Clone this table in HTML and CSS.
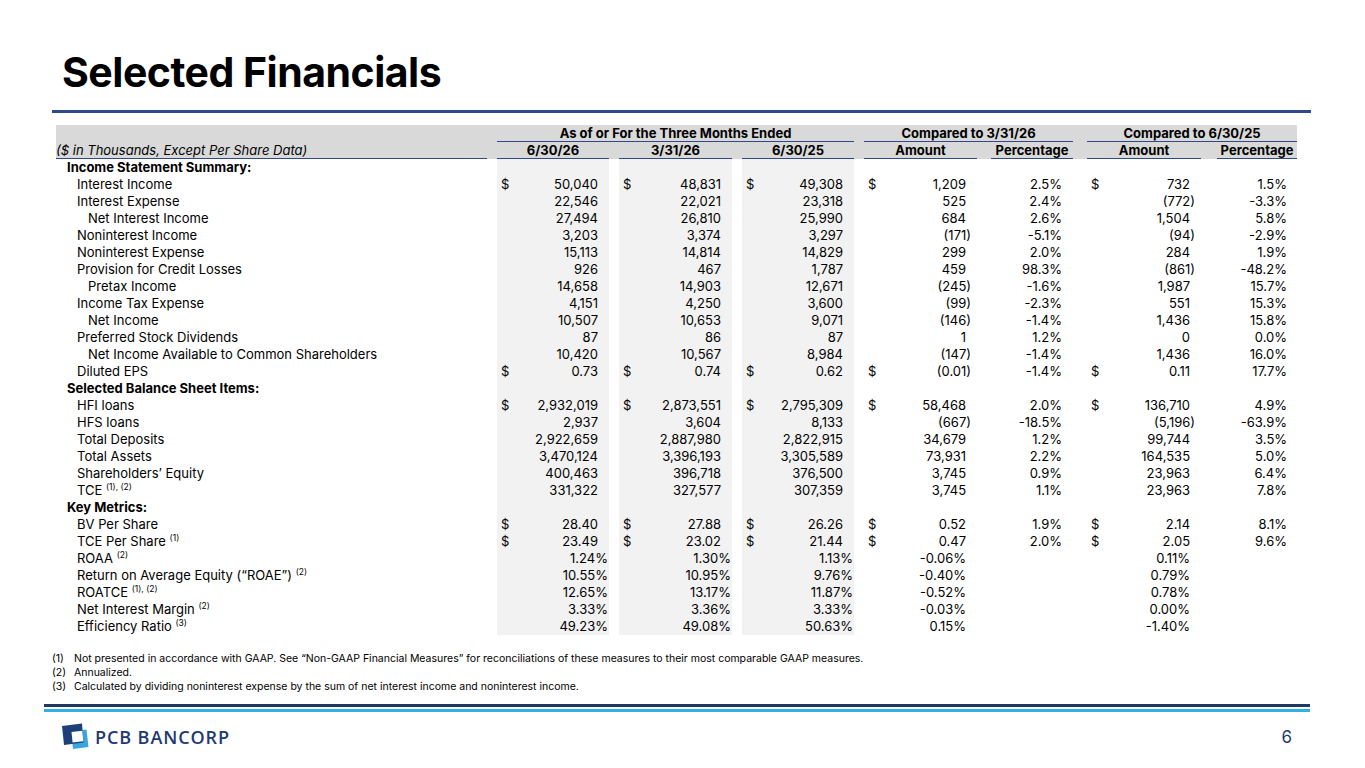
FILE: index.html
```html
<!DOCTYPE html>
<html lang="en">
<head>
<meta charset="utf-8">
<title>Selected Financials</title>
<link rel="stylesheet" href="styles.css">
</head>
<body>
<div class="slide">
  <h1 class="title">Selected Financials</h1>
  <div class="title-rule"></div>

  <table class="fin">
    <colgroup>
      <col class="w-label"><col class="w-sp"><col class="w-c"><col class="w-sp"><col class="w-c2"><col class="w-sp"><col class="w-c">
      <col class="w-sp"><col class="w-a"><col class="w-sp2"><col class="w-p1"><col class="w-sp2"><col class="w-a2"><col class="w-sp3"><col class="w-p2">
    </colgroup>
    <thead>
      <tr>
        <th></th><th></th>
        <th colspan="5" class="ul">As of or For the Three Months Ended</th>
        <th></th>
        <th colspan="3" class="ul">Compared to 3/31/26</th>
        <th></th>
        <th colspan="3" class="ul">Compared to 6/30/25</th>
      </tr>
      <tr>
        <th class="ul cap">($ in Thousands, Except Per Share Data)</th><th></th>
        <th class="ul">6/30/26</th><th></th><th class="ul">3/31/26</th><th></th><th class="ul">6/30/25</th>
        <th></th>
        <th class="ul">Amount</th><th></th><th class="ul">Percentage</th>
        <th></th>
        <th class="ul">Amount</th><th></th><th class="ul">Percentage</th>
      </tr>
    </thead>
    <tbody>
      <tr><td class="sec">Income Statement Summary:</td><td></td><td class="g"></td><td></td><td class="g"></td><td></td><td class="g"></td><td></td><td></td><td></td><td></td><td></td><td></td><td></td><td></td></tr>
      <tr><td class="l1">Interest Income</td><td></td><td class="g n"><span class="cur">$</span>50,040</td><td></td><td class="g n"><span class="cur">$</span>48,831</td><td></td><td class="g n"><span class="cur">$</span>49,308</td><td></td><td class="n"><span class="cur">$</span>1,209</td><td></td><td class="n">2.5%</td><td></td><td class="n"><span class="cur">$</span>732</td><td></td><td class="n p2">1.5%</td></tr>
      <tr><td class="l1">Interest Expense</td><td></td><td class="g n">22,546</td><td></td><td class="g n">22,021</td><td></td><td class="g n">23,318</td><td></td><td class="n">525</td><td></td><td class="n">2.4%</td><td></td><td class="n neg">(772)</td><td></td><td class="n p2">-3.3%</td></tr>
      <tr><td class="l2">Net Interest Income</td><td></td><td class="g n">27,494</td><td></td><td class="g n">26,810</td><td></td><td class="g n">25,990</td><td></td><td class="n">684</td><td></td><td class="n">2.6%</td><td></td><td class="n">1,504</td><td></td><td class="n p2">5.8%</td></tr>
      <tr><td class="l1">Noninterest Income</td><td></td><td class="g n">3,203</td><td></td><td class="g n">3,374</td><td></td><td class="g n">3,297</td><td></td><td class="n neg">(171)</td><td></td><td class="n">-5.1%</td><td></td><td class="n neg">(94)</td><td></td><td class="n p2">-2.9%</td></tr>
      <tr><td class="l1">Noninterest Expense</td><td></td><td class="g n">15,113</td><td></td><td class="g n">14,814</td><td></td><td class="g n">14,829</td><td></td><td class="n">299</td><td></td><td class="n">2.0%</td><td></td><td class="n">284</td><td></td><td class="n p2">1.9%</td></tr>
      <tr><td class="l1">Provision for Credit Losses</td><td></td><td class="g n">926</td><td></td><td class="g n">467</td><td></td><td class="g n">1,787</td><td></td><td class="n">459</td><td></td><td class="n">98.3%</td><td></td><td class="n neg">(861)</td><td></td><td class="n p2">-48.2%</td></tr>
      <tr><td class="l2">Pretax Income</td><td></td><td class="g n">14,658</td><td></td><td class="g n">14,903</td><td></td><td class="g n">12,671</td><td></td><td class="n neg">(245)</td><td></td><td class="n">-1.6%</td><td></td><td class="n">1,987</td><td></td><td class="n p2">15.7%</td></tr>
      <tr><td class="l1">Income Tax Expense</td><td></td><td class="g n">4,151</td><td></td><td class="g n">4,250</td><td></td><td class="g n">3,600</td><td></td><td class="n neg">(99)</td><td></td><td class="n">-2.3%</td><td></td><td class="n">551</td><td></td><td class="n p2">15.3%</td></tr>
      <tr><td class="l2">Net Income</td><td></td><td class="g n">10,507</td><td></td><td class="g n">10,653</td><td></td><td class="g n">9,071</td><td></td><td class="n neg">(146)</td><td></td><td class="n">-1.4%</td><td></td><td class="n">1,436</td><td></td><td class="n p2">15.8%</td></tr>
      <tr><td class="l1">Preferred Stock Dividends</td><td></td><td class="g n">87</td><td></td><td class="g n">86</td><td></td><td class="g n">87</td><td></td><td class="n">1</td><td></td><td class="n">1.2%</td><td></td><td class="n">0</td><td></td><td class="n p2">0.0%</td></tr>
      <tr><td class="l2">Net Income Available to Common Shareholders</td><td></td><td class="g n">10,420</td><td></td><td class="g n">10,567</td><td></td><td class="g n">8,984</td><td></td><td class="n neg">(147)</td><td></td><td class="n">-1.4%</td><td></td><td class="n">1,436</td><td></td><td class="n p2">16.0%</td></tr>
      <tr><td class="l1">Diluted EPS</td><td></td><td class="g n"><span class="cur">$</span>0.73</td><td></td><td class="g n"><span class="cur">$</span>0.74</td><td></td><td class="g n"><span class="cur">$</span>0.62</td><td></td><td class="n neg"><span class="cur">$</span>(0.01)</td><td></td><td class="n">-1.4%</td><td></td><td class="n"><span class="cur">$</span>0.11</td><td></td><td class="n p2">17.7%</td></tr>
      <tr><td class="sec">Selected Balance Sheet Items:</td><td></td><td class="g"></td><td></td><td class="g"></td><td></td><td class="g"></td><td></td><td></td><td></td><td></td><td></td><td></td><td></td><td></td></tr>
      <tr><td class="l1">HFI loans</td><td></td><td class="g n"><span class="cur">$</span>2,932,019</td><td></td><td class="g n"><span class="cur">$</span>2,873,551</td><td></td><td class="g n"><span class="cur">$</span>2,795,309</td><td></td><td class="n"><span class="cur">$</span>58,468</td><td></td><td class="n">2.0%</td><td></td><td class="n"><span class="cur">$</span>136,710</td><td></td><td class="n p2">4.9%</td></tr>
      <tr><td class="l1">HFS loans</td><td></td><td class="g n">2,937</td><td></td><td class="g n">3,604</td><td></td><td class="g n">8,133</td><td></td><td class="n neg">(667)</td><td></td><td class="n">-18.5%</td><td></td><td class="n neg">(5,196)</td><td></td><td class="n p2">-63.9%</td></tr>
      <tr><td class="l1">Total Deposits</td><td></td><td class="g n">2,922,659</td><td></td><td class="g n">2,887,980</td><td></td><td class="g n">2,822,915</td><td></td><td class="n">34,679</td><td></td><td class="n">1.2%</td><td></td><td class="n">99,744</td><td></td><td class="n p2">3.5%</td></tr>
      <tr><td class="l1">Total Assets</td><td></td><td class="g n">3,470,124</td><td></td><td class="g n">3,396,193</td><td></td><td class="g n">3,305,589</td><td></td><td class="n">73,931</td><td></td><td class="n">2.2%</td><td></td><td class="n">164,535</td><td></td><td class="n p2">5.0%</td></tr>
      <tr><td class="l1">Shareholders’ Equity</td><td></td><td class="g n">400,463</td><td></td><td class="g n">396,718</td><td></td><td class="g n">376,500</td><td></td><td class="n">3,745</td><td></td><td class="n">0.9%</td><td></td><td class="n">23,963</td><td></td><td class="n p2">6.4%</td></tr>
      <tr><td class="l1">TCE <sup>(1), (2)</sup></td><td></td><td class="g n">331,322</td><td></td><td class="g n">327,577</td><td></td><td class="g n">307,359</td><td></td><td class="n">3,745</td><td></td><td class="n">1.1%</td><td></td><td class="n">23,963</td><td></td><td class="n p2">7.8%</td></tr>
      <tr><td class="sec">Key Metrics:</td><td></td><td class="g"></td><td></td><td class="g"></td><td></td><td class="g"></td><td></td><td></td><td></td><td></td><td></td><td></td><td></td><td></td></tr>
      <tr><td class="l1">BV Per Share</td><td></td><td class="g n"><span class="cur">$</span>28.40</td><td></td><td class="g n"><span class="cur">$</span>27.88</td><td></td><td class="g n"><span class="cur">$</span>26.26</td><td></td><td class="n"><span class="cur">$</span>0.52</td><td></td><td class="n">1.9%</td><td></td><td class="n"><span class="cur">$</span>2.14</td><td></td><td class="n p2">8.1%</td></tr>
      <tr><td class="l1">TCE Per Share <sup>(1)</sup></td><td></td><td class="g n"><span class="cur">$</span>23.49</td><td></td><td class="g n"><span class="cur">$</span>23.02</td><td></td><td class="g n"><span class="cur">$</span>21.44</td><td></td><td class="n"><span class="cur">$</span>0.47</td><td></td><td class="n">2.0%</td><td></td><td class="n"><span class="cur">$</span>2.05</td><td></td><td class="n p2">9.6%</td></tr>
      <tr><td class="l1">ROAA <sup>(2)</sup></td><td></td><td class="g n pc">1.24%</td><td></td><td class="g n pc">1.30%</td><td></td><td class="g n pc">1.13%</td><td></td><td class="n">-0.06%</td><td></td><td></td><td></td><td class="n">0.11%</td><td></td><td></td></tr>
      <tr><td class="l1">Return on Average Equity (“ROAE”) <sup>(2)</sup></td><td></td><td class="g n pc">10.55%</td><td></td><td class="g n pc">10.95%</td><td></td><td class="g n pc">9.76%</td><td></td><td class="n">-0.40%</td><td></td><td></td><td></td><td class="n">0.79%</td><td></td><td></td></tr>
      <tr><td class="l1">ROATCE <sup>(1), (2)</sup></td><td></td><td class="g n pc">12.65%</td><td></td><td class="g n pc">13.17%</td><td></td><td class="g n pc">11.87%</td><td></td><td class="n">-0.52%</td><td></td><td></td><td></td><td class="n">0.78%</td><td></td><td></td></tr>
      <tr><td class="l1">Net Interest Margin <sup>(2)</sup></td><td></td><td class="g n pc">3.33%</td><td></td><td class="g n pc">3.36%</td><td></td><td class="g n pc">3.33%</td><td></td><td class="n">-0.03%</td><td></td><td></td><td></td><td class="n">0.00%</td><td></td><td></td></tr>
      <tr><td class="l1">Efficiency Ratio <sup>(3)</sup></td><td></td><td class="g n pc">49.23%</td><td></td><td class="g n pc">49.08%</td><td></td><td class="g n pc">50.63%</td><td></td><td class="n">0.15%</td><td></td><td></td><td></td><td class="n">-1.40%</td><td></td><td></td></tr>
    </tbody>
  </table>

  <ol class="notes">
    <li><span class="mark">(1)</span><span>Not presented in accordance with GAAP. See “Non-GAAP Financial Measures” for reconciliations of these measures to their most comparable GAAP measures.</span></li>
    <li><span class="mark">(2)</span><span>Annualized.</span></li>
    <li><span class="mark">(3)</span><span>Calculated by dividing noninterest expense by the sum of net interest income and noninterest income.</span></li>
  </ol>

  <div class="footer-rules">
    <div class="rule-dark"></div>
    <div class="rule-light"></div>
  </div>

  <footer class="footer">
    <div class="logo">
      <svg class="logo-mark" width="27" height="27" viewBox="0 0 27 27" aria-hidden="true">
        <polygon points="9,8.5 24.5,6.5 26.5,24 11,26" fill="#3aa6df"/>
        <polygon points="0,3 20,0.5 21.5,19.5 2,22" fill="#1e3f78"/>
        <polygon points="9.5,9 20.3,7.8 21.3,18.3 10.6,19.6" fill="#ffffff"/>
      </svg>
      <span class="logo-text">PCB BANCORP</span>
    </div>
    <div class="page-num">6</div>
  </footer>
</div>
</body>
</html>
```

FILE: styles.css
```css
html, body {
  margin: 0;
  padding: 0;
  background: #ffffff;
}

.slide {
  width: 1365px;
  height: 768px;
  overflow: hidden;
  background: #ffffff;
  color: #000000;
  font-family: Inter, "Liberation Sans", sans-serif;
}

.title {
  margin: 0;
  padding: 47px 0 0 62px;
  font-size: 41px;
  line-height: 50px;
  font-weight: 700;
  letter-spacing: -0.5px;
}

.title-rule {
  margin: 13px 0 0 52px;
  width: 1259px;
  height: 3px;
  background: #2d4b87;
}

.fin {
  margin: 12px 0 0 56px;
  width: 1241px;
  table-layout: fixed;
  border-collapse: separate;
  border-spacing: 0;
  font-size: 13px;
}

.w-label { width: 431px; }
.w-sp { width: 10px; }
.w-c { width: 112px; }
.w-c2 { width: 113px; }
.w-a { width: 113px; }
.w-sp2 { width: 14px; }
.w-p1 { width: 82px; }
.w-a2 { width: 114px; }
.w-sp3 { width: 16px; }
.w-p2 { width: 80px; }

.fin th {
  background: #d9d9d9;
  font-weight: 700;
  line-height: 16px;
  padding: 0;
  text-align: center;
  white-space: nowrap;
  border-bottom: 1px solid transparent;
}

.fin th.ul {
  border-bottom-color: #2e4b86;
}

.fin th.cap {
  text-align: left;
  font-weight: 400;
  font-style: italic;
}

.fin td {
  padding: 0;
  line-height: 17px;
  height: 17px;
  white-space: nowrap;
}

.fin td.g {
  background: #f2f2f2;
}

.fin td.n {
  text-align: right;
  padding-right: 11px;
}

.fin td.n.neg {
  padding-right: 6px;
}

.fin td.n.pc {
  padding-right: 1px;
}

.fin td.n.p2 {
  padding-right: 10px;
}

.cur {
  float: left;
  margin-left: 4px;
}

.sec {
  font-weight: 700;
  padding-left: 11px !important;
}

.l1 {
  padding-left: 21px !important;
}

.l2 {
  padding-left: 32px !important;
}

sup {
  font-size: 8.5px;
  line-height: 0;
  vertical-align: 5px;
}

.notes {
  list-style: none;
  margin: 17px 0 0 52px;
  padding: 0;
  font-size: 10.5px;
  line-height: 14px;
}

.notes li {
  display: grid;
  grid-template-columns: 22px auto;
}

.footer-rules {
  margin: 10px 0 0 44px;
  width: 1266px;
}

.rule-dark {
  height: 3px;
  background: #1f3864;
}

.rule-light {
  margin-top: 2px;
  height: 3px;
  background: #2fb0e6;
}

.footer {
  display: flex;
  justify-content: space-between;
  align-items: center;
  margin: 11px 0 0 62px;
  width: 1230px;
}

.logo {
  display: flex;
  align-items: center;
  gap: 6px;
}

.logo-mark {
  display: block;
}

.logo-text {
  font-family: "Open Sans", "Liberation Sans", sans-serif;
  font-weight: 600;
  font-size: 18px;
  letter-spacing: 0.9px;
  color: #1f3a70;
}

.page-num {
  font-size: 17px;
  color: #1f3a6e;
}
```
